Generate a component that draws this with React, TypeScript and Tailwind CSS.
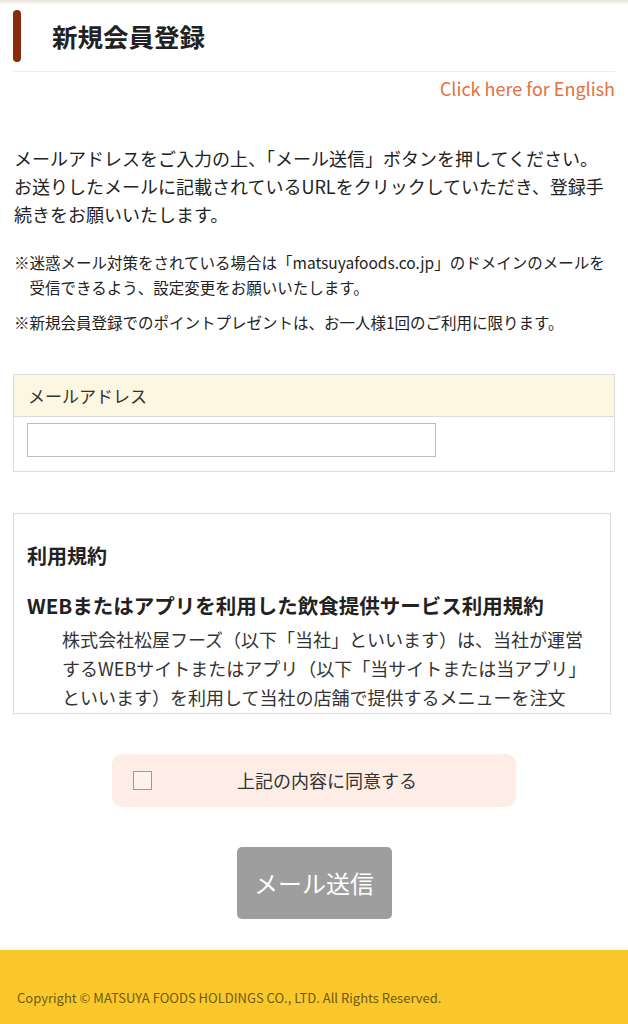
const App = () => {
  return (
    <div className="min-h-screen bg-white text-[#222] font-['Noto_Sans_CJK_JP','Noto_Sans',sans-serif]">
      {/* header shadow */}
      <div className="h-[5px] bg-gradient-to-b from-[#e6e2da] to-white" />

      <div className="px-[13px]">
        {/* Title */}
        <div className="flex items-center pt-[5px]">
          <span className="w-2 h-[52px] rounded-full bg-[#8a2a0c]" />
          <h1 className="ml-[31px] text-[25.5px] font-bold leading-none">新規会員登録</h1>
        </div>
        <div className="mt-[9px] border-b border-[#ececec]" />

        <div className="mt-[4px] text-right text-[18px] leading-[24px] text-[#e3703f]">
          Click here for English
        </div>

        {/* Intro */}
        <p className="mt-[44px] ml-px text-[18px] leading-[28px]">
          メールアドレスをご入力の上、「メール送信」ボタンを押してください。お送りしたメールに記載されているURLをクリックしていただき、登録手続きをお願いいたします。
        </p>

        <p className="mt-[22px] ml-px pl-[15.5px] -indent-[15.5px] text-[15.5px] leading-[25px]">
          ※迷惑メール対策をされている場合は「matsuyafoods.co.jp」のドメインのメールを受信できるよう、設定変更をお願いいたします。
        </p>
        <p className="mt-[10px] ml-px text-[15.5px] leading-[25px]">
          ※新規会員登録でのポイントプレゼントは、お一人様1回のご利用に限ります。
        </p>

        {/* Email */}
        <div className="mt-[39px] border border-[#dcdcdc]">
          <div className="h-[42px] flex items-center px-[14px] bg-[#fdf6e0] border-b border-[#dcdcdc] text-[17px] text-[#333]">
            メールアドレス
          </div>
          <div className="px-[13px] pt-[6px] pb-[14px]">
            <input type="text" className="block w-[409px] h-[34px] border border-[#bdbdbd] bg-white" />
          </div>
        </div>

        {/* Terms */}
        <div className="mt-[41px] mr-[4px] h-[201px] overflow-hidden border border-[#dcdcdc] px-[13px] pt-[29px]">
          <h2 className="text-[20px] font-bold leading-[26px]">利用規約</h2>
          <h3 className="mt-[22px] text-[20.5px] font-bold leading-[28px] whitespace-nowrap">
            WEBまたはアプリを利用した飲食提供サービス利用規約
          </h3>
          <p className="mt-[6px] pl-[35px] text-[18px] leading-[29px] text-[#333]">
            株式会社松屋フーズ（以下「当社」といいます）は、当社が運営するWEBサイトまたはアプリ（以下「当サイトまたは当アプリ」といいます）を利用して当社の店舗で提供するメニューを注文し、店舗で商品を受け取るサービスの利用について、以下のとおり定めます。
          </p>
        </div>

        {/* Agree */}
        <label className="mx-auto mt-[40px] flex items-center w-[404px] h-[53px] rounded-[10px] bg-[#fdede6]">
          <span className="ml-[21px] w-[19px] h-[19px] border-[1.5px] border-[#9a9a9a] bg-[#fdf3ee]" />
          <span className="ml-[85px] text-[18px] text-[#333]">上記の内容に同意する</span>
        </label>

        {/* Submit */}
        <div className="mt-[40px] flex justify-center">
          <button className="w-[155px] h-[72px] rounded-[5px] bg-[#9e9e9e] text-white text-[24px]">
            メール送信
          </button>
        </div>
      </div>

      {/* Footer */}
      <footer className="mt-[31px] h-[74px] bg-[#fbc82b] flex items-center px-[17px] pt-[22px]">
        <span className="text-[13px] text-[#6e5a14]">
          Copyright © MATSUYA FOODS HOLDINGS CO., LTD. All Rights Reserved.
        </span>
      </footer>
    </div>
  );
};

export default App;
